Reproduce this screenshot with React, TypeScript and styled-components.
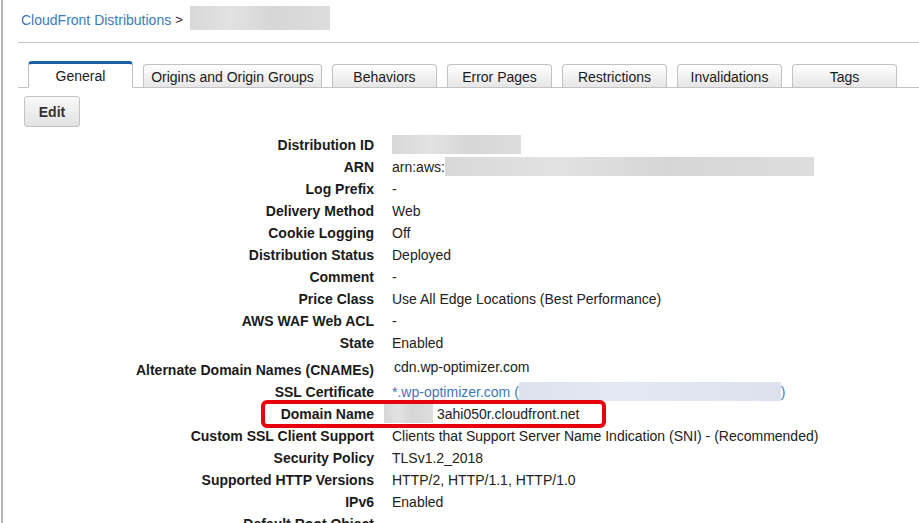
import styled, { createGlobalStyle } from "styled-components";
import { FC, ReactNode } from "react";

const GlobalStyle = createGlobalStyle`
    html, body {
        margin: 0;
        padding: 0;
        overflow: hidden;
        background: #ffffff;
        font-family: "Liberation Sans", Arial, sans-serif;
        font-size: 14px;
        color: #222222;
    }
`;

const tabs = [
    { name: "General", active: true },
    { name: "Origins and Origin Groups" },
    { name: "Behaviors" },
    { name: "Error Pages" },
    { name: "Restrictions" },
    { name: "Invalidations" },
    { name: "Tags" },
];

type Row = { label: string; value: ReactNode; tall?: boolean; highlight?: boolean };

const Page = styled.div`
    min-height: 523px;
    margin-left: 1px;
    border-left: 2px solid #b4b4b4;
`;

const Breadcrumb = styled.div`
    display: flex;
    align-items: center;
    height: 42px;
    padding: 0 0 3px 18px;
    box-sizing: border-box;
`;

const CrumbLink = styled.a`
    color: #3d78c0;
    font-size: 14px;
    cursor: pointer;
`;

const CrumbSep = styled.span`
    color: #222;
    font-size: 13px;
    margin: 0 7px 0 4px;
`;

const Blur = styled.span<{ $w: number; $h?: number; $blue?: boolean; $shift?: number; $after?: number }>`
    display: inline-block;
    vertical-align: middle;
    width: ${(p) => p.$w}px;
    height: ${(p) => p.$h ?? 19}px;
    margin-left: ${(p) => p.$shift ?? 0}px;
    margin-right: ${(p) => p.$after ?? 0}px;
    margin-top: -3px;
    background: ${(p) =>
        p.$blue
            ? "linear-gradient(90deg, #dce3ee, #e3e9f2 40%, #dbe2ed)"
            : "linear-gradient(90deg, #d8d8d8, #e2e2e2 30%, #d6d6d6 60%, #dddddd)"};
`;

const Content = styled.div`
    margin-left: 15px;
    border-top: 1px solid #c4c4c4;
    padding-top: 18px;
`;

const TabBar = styled.div`
    display: flex;
    align-items: flex-end;
    gap: 10px;
    height: 26px;
    padding-left: 10px;
    border-bottom: 1px solid #c4c4c4;
`;

const Tab = styled.div<{ $active: boolean; $wide: boolean }>`
    box-sizing: border-box;
    width: ${(p) => (p.$wide ? 179 : 105)}px;
    height: ${(p) => (p.$active ? 27 : 24)}px;
    margin-bottom: -1px;
    display: flex;
    align-items: center;
    justify-content: center;
    font-size: 14px;
    color: #1a1a1a;
    border: 1px solid #c2c2c2;
    border-bottom: ${(p) => (p.$active ? "1px solid #ffffff" : "1px solid #c4c4c4")};
    border-top: ${(p) => (p.$active ? "3px solid #1e5ea6" : "1px solid #c2c2c2")};
    border-radius: 4px 4px 0 0;
    background: ${(p) => (p.$active ? "#ffffff" : "linear-gradient(#ffffff, #e6e6e6)")};
    padding-top: ${(p) => (p.$active ? 0 : 2)}px;
    cursor: pointer;
`;

const EditButton = styled.button`
    display: block;
    margin: 8px 0 0 6px;
    width: 56px;
    height: 31px;
    border: 1px solid #c4c4c4;
    border-radius: 3px;
    background: linear-gradient(#f9f9f9, #e2e2e2);
    font-family: "Liberation Sans", Arial, sans-serif;
    font-weight: bold;
    font-size: 14px;
    color: #333;
    cursor: pointer;
`;

const Props = styled.div`
    display: flex;
    flex-direction: column;
    padding-top: 7px;
`;

const PropRow = styled.div<{ $tall: boolean }>`
    position: relative;
    display: flex;
    align-items: flex-start;
    height: ${(p) => (p.$tall ? 27 : 22)}px;
    line-height: 22px;
`;

const Label = styled.div<{ $tall: boolean }>`
    width: 356px;
    flex-shrink: 0;
    text-align: right;
    font-weight: bold;
    color: #1a1a1a;
    padding-top: ${(p) => (p.$tall ? 5 : 0)}px;
`;

const Value = styled.div<{ $tall: boolean }>`
    margin-left: ${(p) => (p.$tall ? 20 : 18)}px;
    white-space: nowrap;
    color: #222;
    padding-top: ${(p) => (p.$tall ? 2 : 0)}px;
`;

const LinkText = styled.span`
    color: #3d78c0;
    cursor: pointer;
`;

const Highlight = styled.div`
    position: absolute;
    left: 243px;
    top: -3px;
    width: 345px;
    height: 28px;
    box-sizing: border-box;
    border: 4px solid #e8000e;
    border-radius: 6px;
    pointer-events: none;
`;

const rows: Row[] = [
    { label: "Distribution ID", value: <Blur $w={129} /> },
    { label: "ARN", value: <>arn:aws:<Blur $w={369} /></> },
    { label: "Log Prefix", value: "-" },
    { label: "Delivery Method", value: "Web" },
    { label: "Cookie Logging", value: "Off" },
    { label: "Distribution Status", value: "Deployed" },
    { label: "Comment", value: "-" },
    { label: "Price Class", value: "Use All Edge Locations (Best Performance)" },
    { label: "AWS WAF Web ACL", value: "-" },
    { label: "State", value: "Enabled" },
    { label: "Alternate Domain Names (CNAMEs)", value: "cdn.wp-optimizer.com", tall: true },
    {
        label: "SSL Certificate",
        value: (
            <LinkText>
                *.wp-optimizer.com (<Blur $w={262} $blue />)
            </LinkText>
        ),
    },
    {
        label: "Domain Name",
        value: <><Blur $w={49} $shift={-8} $after={4} />3ahi050r.cloudfront.net</>,
        highlight: true,
    },
    { label: "Custom SSL Client Support", value: "Clients that Support Server Name Indication (SNI) - (Recommended)" },
    { label: "Security Policy", value: "TLSv1.2_2018" },
    { label: "Supported HTTP Versions", value: "HTTP/2, HTTP/1.1, HTTP/1.0" },
    { label: "IPv6", value: "Enabled" },
    { label: "Default Root Object", value: "-" },
];

const App: FC = () => {
    return (
        <Page>
            <GlobalStyle />
            <Breadcrumb>
                <CrumbLink>CloudFront Distributions</CrumbLink>
                <CrumbSep>&gt;</CrumbSep>
                <Blur $w={140} $h={24} />
            </Breadcrumb>
            <Content>
                <TabBar>
                    {tabs.map((t) => (
                        <Tab key={t.name} $active={!!t.active} $wide={t.name.length > 15}>
                            {t.name}
                        </Tab>
                    ))}
                </TabBar>
                <EditButton>Edit</EditButton>
                <Props>
                    {rows.map((r) => (
                        <PropRow key={r.label} $tall={!!r.tall}>
                            <Label $tall={!!r.tall}>{r.label}</Label>
                            <Value $tall={!!r.tall}>{r.value}</Value>
                            {r.highlight && <Highlight />}
                        </PropRow>
                    ))}
                </Props>
            </Content>
        </Page>
    );
};

export default App;
